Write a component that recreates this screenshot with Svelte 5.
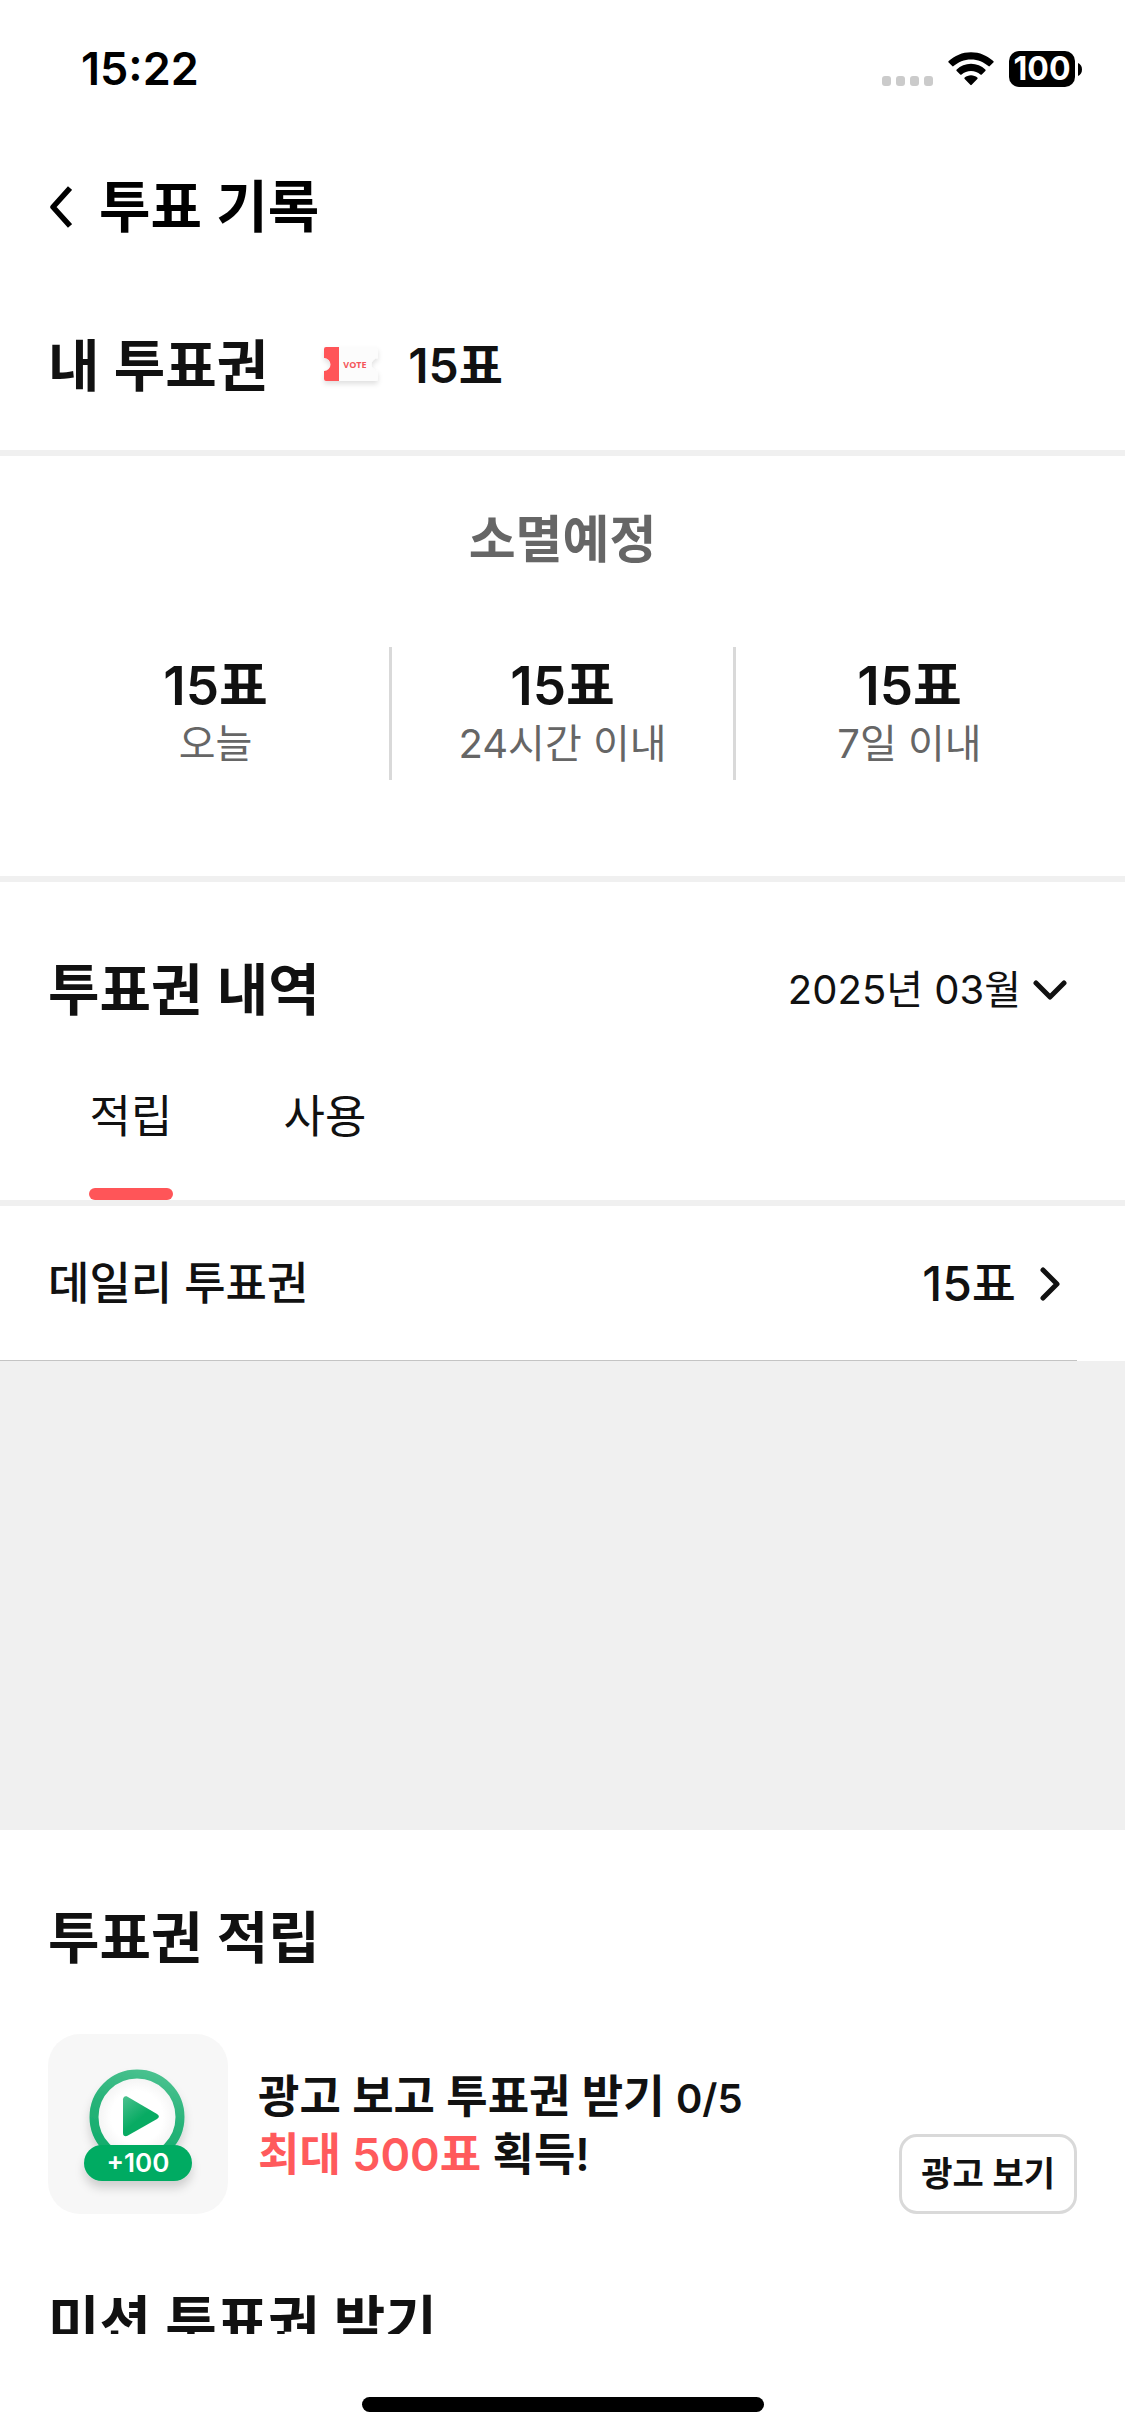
<script lang="ts">
	type Tab = 'earn' | 'use';

	const balance = 15;

	const expiring = [
		{ label: '오늘', count: 15 },
		{ label: '24시간 이내', count: 15 },
		{ label: '7일 이내', count: 15 }
	];

	const months = ['2025년 03월', '2025년 02월', '2025년 01월'];

	const tabs: { id: Tab; label: string }[] = [
		{ id: 'earn', label: '적립' },
		{ id: 'use', label: '사용' }
	];

	const history: Record<Tab, { title: string; count: number }[]> = {
		earn: [{ title: '데일리 투표권', count: 15 }],
		use: []
	};

	let month = $state(months[0]);
	let activeTab = $state<Tab>('earn');
</script>

<div class="screen">
	<div class="status">
		<span class="time">15:22</span>
		<div class="indicators">
			<svg class="signal" viewBox="0 0 51 36" aria-hidden="true">
				{#each [0, 14, 28, 42] as x (x)}
					<rect {x} y="25" width="9" height="10" rx="3" fill="#cbcbcb" />
				{/each}
			</svg>
			<svg class="wifi" viewBox="0 0 46 36" aria-hidden="true">
				<path
					d="M23 1.2C14.4 1.2 6.5 4.6 .7 10.1a1 1 0 0 0 0 1.5l3.5 3.5a1 1 0 0 0 1.4 0C10.1 10.900 16.2 8.4 23 8.4s12.900 2.5 17.400 6.700a1 1 0 0 0 1.400 0l3.500-3.500a1 1 0 0 0 0-1.500C39.500 4.600 31.600 1.200 23 1.200Z"
				/>
				<path
					d="M23 12.800c-5.500 0-10.500 2.100-14.300 5.600a1 1 0 0 0 0 1.500l3.500 3.500a1 1 0 0 0 1.400 0c2.500-2.200 5.800-3.500 9.400-3.500s6.900 1.300 9.400 3.500a1 1 0 0 0 1.400 0l3.500-3.500a1 1 0 0 0 0-1.500C33.500 14.900 28.500 12.800 23 12.800Z"
				/>
				<path
					d="M23 24.300c-2.400 0-4.600.9-6.300 2.300a1 1 0 0 0 0 1.500l5.600 5.700a1 1 0 0 0 1.400 0l5.600-5.700a1 1 0 0 0 0-1.500c-1.700-1.400-3.900-2.300-6.300-2.300Z"
				/>
			</svg>
			<div class="battery">
				<span class="level">100</span>
				<svg class="cap" viewBox="0 0 4 13" aria-hidden="true">
					<path d="M0 0c2.500 1 4 3.500 4 6.500S2.500 12 0 13Z" />
				</svg>
			</div>
		</div>
	</div>

	<header class="topbar">
		<button class="back" aria-label="뒤로">
			<svg viewBox="0 0 24 44" aria-hidden="true">
				<path d="M22 3 5 22l17 19" fill="none" stroke="#000" stroke-width="5.500" stroke-linejoin="round" />
			</svg>
		</button>
		<h1>투표 기록</h1>
	</header>

	<main>
		<section class="balance">
			<h2>내 투표권</h2>
			<svg class="ticket" viewBox="0 0 64 52" aria-hidden="true">
				<defs>
					<filter id="ticket-shadow" x="-20%" y="-20%" width="140%" height="160%">
						<feDropShadow dx="0" dy="3" stdDeviation="2.500" flood-color="#000" flood-opacity=".12" />
					</filter>
				</defs>
				<g filter="url(#ticket-shadow)">
					<path
						d="M6 7h50a2 2 0 0 1 2 2v9a6 6 0 0 0 0 13v8a2 2 0 0 1-2 2H6a2 2 0 0 1-2-2v-8a6.500 6.500 0 0 0 0-13V9a2 2 0 0 1 2-2Z"
						fill="#fcfcfc"
					/>
				</g>
				<path d="M6 7h13v34H6a2 2 0 0 1-2-2v-8a6.500 6.500 0 0 0 0-13V9a2 2 0 0 1 2-2Z" fill="#ff5558" />
				<text x="35" y="28" class="ticket-text">VOTE</text>
			</svg>
			<strong>{balance}표</strong>
		</section>

		<section class="expiry">
			<h2>소멸예정</h2>
			<ul>
				{#each expiring as item (item.label)}
					<li>
						<strong>{item.count}표</strong>
						<span>{item.label}</span>
					</li>
				{/each}
			</ul>
		</section>

		<section class="history">
			<div class="history-head">
				<h2>투표권 내역</h2>
				<label class="month">
					<select bind:value={month} aria-label="조회 월">
						{#each months as m (m)}
							<option>{m}</option>
						{/each}
					</select>
					<svg viewBox="0 0 34 20" aria-hidden="true">
						<path d="M3 3l14 14L31 3" />
					</svg>
				</label>
			</div>
			<div class="tabs" role="tablist">
				{#each tabs as tab (tab.id)}
					<button
						role="tab"
						class:active={activeTab === tab.id}
						aria-selected={activeTab === tab.id}
						onclick={() => (activeTab = tab.id)}
					>
						{tab.label}
					</button>
				{/each}
			</div>
		</section>

		<div class="records">
			{#each history[activeTab] as record (record.title)}
				<div class="record-row">
					<button class="record">
						<span>{record.title}</span>
						<span class="count">{record.count}표</span>
						<svg viewBox="0 0 20 34" aria-hidden="true">
							<path d="M3 3l14 14L3 31" />
						</svg>
					</button>
				</div>
			{/each}
		</div>

		<section class="earn">
			<h2>투표권 적립</h2>
			<div class="ad">
				<svg class="thumb" viewBox="0 0 180 180" aria-hidden="true">
					<defs>
						<linearGradient id="ring" x1=".7" y1="0" x2=".4" y2="1">
							<stop offset="0" stop-color="#48c18e" />
							<stop offset=".45" stop-color="#28b379" />
							<stop offset="1" stop-color="#12ac6b" />
						</linearGradient>
						<linearGradient id="play" x1="0" y1="0" x2=".7" y2="1">
							<stop offset="0" stop-color="#4cc18f" />
							<stop offset=".6" stop-color="#08ab63" />
						</linearGradient>
						<radialGradient id="disc">
							<stop offset=".6" stop-color="#fff" />
							<stop offset="1" stop-color="#f1f1f1" />
						</radialGradient>
						<filter id="thumb-shadow" x="-30%" y="-30%" width="160%" height="200%">
							<feDropShadow dx="0" dy="7" stdDeviation="5" flood-color="#000" flood-opacity=".16" />
						</filter>
					</defs>
					<rect width="180" height="180" rx="32" fill="#f7f7f7" />
					<circle cx="89" cy="83" r="43" fill="url(#disc)" stroke="url(#ring)" stroke-width="9" filter="url(#thumb-shadow)" />
					<path
						d="M75 65.500c0-2.500 2-4 4.500-2.800l29.500 17.300c2.500 1.500 2.500 3.500 0 5L79.500 101.800c-2.500 1.200-4.500 0-4.500-2.800Z"
						fill="url(#play)"
					/>
					<rect x="36" y="111" width="108" height="36" rx="18" fill="#00ab62" filter="url(#thumb-shadow)" />
					<text x="90" y="138" class="thumb-text">+100</text>
				</svg>
				<p>
					광고 보고 투표권 받기 <small>0/5</small><br />
					<em>최대 500표</em> 획득!
				</p>
				<button class="watch">광고 보기</button>
			</div>
			<h2>미션 투표권 받기</h2>
		</section>
	</main>

	<div class="home"><span></span></div>
</div>

<style>
	:global(body) {
		margin: 0;
		background: #fff;
	}

	.screen {
		height: 100vh;
		display: flex;
		flex-direction: column;
		overflow: hidden;
		background: #fff;
		color: #111;
		font-family: Inter, 'Noto Sans CJK KR', sans-serif;
	}
	h1,
	h2,
	p,
	ul {
		margin: 0;
		padding: 0;
	}
	h1,
	h2 {
		font-size: 56px;
		line-height: 72px;
		font-weight: 600;
	}
	strong {
		font-weight: 600;
	}
	button,
	select {
		margin: 0;
		padding: 0;
		border: none;
		background: none;
		color: inherit;
		font: inherit;
		cursor: pointer;
	}
	svg {
		display: block;
		flex: none;
	}

	/* Status bar */
	.status {
		flex: none;
		box-sizing: border-box;
		height: 132px;
		padding: 6px 43px 0 81px;
		display: flex;
		align-items: center;
		justify-content: space-between;
		color: #000;
	}
	.time {
		font-size: 45px;
		line-height: 60px;
		font-weight: 600;
	}
	.indicators {
		display: flex;
		align-items: center;
		gap: 15px;
	}
	.signal {
		width: 51px;
		height: 36px;
	}
	.wifi {
		width: 46px;
		height: 36px;
	}
	.battery {
		display: flex;
		align-items: center;
		gap: 3px;
	}
	.level {
		width: 66px;
		border-radius: 10px;
		background: #000;
		color: #fff;
		font-size: 32px;
		line-height: 36px;
		font-weight: 700;
		text-align: center;
	}
	.cap {
		width: 4px;
		height: 13px;
	}

	.topbar {
		flex: none;
		box-sizing: border-box;
		height: 148px;
		padding: 2px 48px 0;
		display: flex;
		align-items: center;
		gap: 27px;
		color: #000;
	}
	.back svg {
		width: 24px;
		height: 44px;
	}

	main {
		flex: 1;
		min-height: 0;
		overflow: hidden;
	}

	/* Owned tickets */
	.balance {
		padding: 50px 48px 48px;
		display: flex;
		align-items: center;
		border-bottom: 6px solid #f0f0f0;
	}
	.balance strong {
		font-size: 48px;
		line-height: 60px;
	}
	.ticket {
		width: 64px;
		height: 52px;
		margin: 0 24px 0 52px;
	}
	.ticket-text {
		font: 700 9px 'Open Sans', sans-serif;
		fill: #f4555a;
		text-anchor: middle;
	}

	.expiry {
		padding: 48px 42px 96px;
		border-bottom: 6px solid #f0f0f0;
		color: #666;
		text-align: center;
	}
	.expiry h2 {
		font-size: 51px;
	}
	.expiry ul {
		margin-top: 71px;
		display: grid;
		grid-template-columns: repeat(3, 1fr);
		list-style: none;
	}
	.expiry li {
		padding: 9px 0 8px;
		display: flex;
		flex-direction: column;
	}
	.expiry li:nth-child(2) {
		border: solid #d9d9d9;
		border-width: 0 3px;
	}
	.expiry strong {
		color: #111;
		font-size: 53px;
		line-height: 60px;
	}
	.expiry span {
		font-size: 40px;
		line-height: 56px;
	}

	/* History */
	.history {
		padding: 72px 48px 0;
		border-bottom: 6px solid #f0f0f0;
	}
	.history-head {
		display: flex;
		align-items: center;
		justify-content: space-between;
	}
	.month {
		padding-right: 10px;
		display: flex;
		align-items: center;
		gap: 12px;
	}
	.month select {
		appearance: none;
		field-sizing: content;
		font-size: 40px;
		line-height: 56px;
	}
	.month svg {
		width: 34px;
		height: 20px;
	}
	.month path,
	.record path {
		fill: none;
		stroke: #111;
		stroke-width: 5;
		stroke-linecap: round;
		stroke-linejoin: round;
	}
	.tabs {
		margin-top: 61px;
		padding: 0 41px;
		display: flex;
		gap: 110px;
	}
	.tabs button {
		min-width: 84px;
		font-size: 45px;
		line-height: 60px;
	}
	.tabs button::after {
		content: '';
		display: block;
		height: 12px;
		margin-top: 41px;
		border-radius: 6px;
	}
	.tabs .active::after {
		background: #ff5558;
	}

	.records {
		min-height: 624px;
		background: #f0f0f0;
	}
	.record-row {
		padding-right: 48px;
		background: #fff;
	}
	.record {
		width: 100%;
		padding: 48px 17px 46px 48px;
		display: flex;
		align-items: center;
		border-bottom: 1px solid #c4c4c4;
		font-size: 45px;
		line-height: 60px;
		font-weight: 500;
	}
	.count {
		margin: 0 24px 0 auto;
		font-size: 48px;
	}
	.record svg {
		width: 20px;
		height: 34px;
	}

	/* Earning */
	.earn {
		padding: 72px 48px;
		background: #fff;
	}
	.ad {
		margin: 60px 0 72px;
		display: flex;
	}
	.thumb {
		width: 180px;
		height: 180px;
	}
	.thumb-text {
		font: 600 26px Inter, sans-serif;
		fill: #fff;
		text-anchor: middle;
	}
	.ad p {
		flex: 1;
		align-self: center;
		margin-left: 30px;
		padding-top: 3px;
		font-size: 45px;
		line-height: 56px;
		font-weight: 600;
	}
	.ad small {
		font-size: 40px;
	}
	.ad em {
		color: #ff5a5c;
		font-style: normal;
	}
	.watch {
		align-self: flex-end;
		padding: 0 19px;
		border: 3px solid #d9d9d9;
		border-radius: 18px;
		font-size: 34px;
		line-height: 74px;
		font-weight: 600;
	}

	/* Home indicator area */
	.home {
		flex: none;
		box-sizing: border-box;
		height: 102px;
		padding-top: 63px;
		background: #fff;
	}
	.home span {
		display: block;
		width: 402px;
		height: 15px;
		margin: 0 auto;
		border-radius: 8px;
		background: #000;
	}
</style>
